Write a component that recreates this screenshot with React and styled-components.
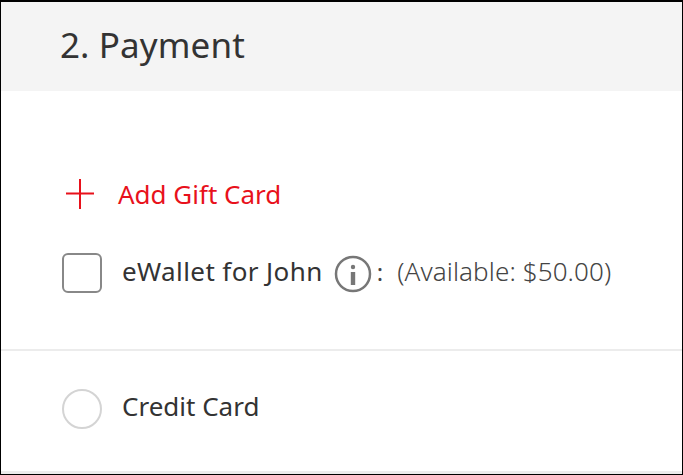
import React from "react";
import styled, { createGlobalStyle } from "styled-components";

const Global = createGlobalStyle`
  html, body { margin: 0; padding: 0; background: #fff; }
  * { box-sizing: border-box; }
`;

const Frame = styled.div`
  width: 683px;
  height: 475px;
  display: flex;
  flex-direction: column;
  border: 1px solid #000;
  border-top-width: 2px;
  background: #fff;
  font-family: "Noto Sans", "Open Sans", sans-serif;
  color: #333;
  overflow: hidden;
`;

const Header = styled.header`
  height: 89px;
  background: #f4f4f4;
  display: flex;
  align-items: center;
  padding: 0 0 4px 59px;
`;

const Title = styled.h2`
  margin: 0;
  font-size: 35px;
  font-weight: 400;
  letter-spacing: 0.1px;
  color: #333;
`;

const GiftSection = styled.section`
  height: 260px;
  padding: 87px 0 0 61px;
  border-bottom: 2px solid #ececec;
`;

const AddGift = styled.a`
  display: flex;
  align-items: center;
  gap: 24px;
  height: 32px;
  padding-left: 4px;
  color: #e8111b;
  font-size: 26px;
`;

const Row = styled.div`
  display: flex;
  align-items: center;
  margin-top: ${(p) => p.$top || 0}px;
`;

const CheckBox = styled.span`
  width: 40px;
  height: 40px;
  border: 2px solid #888;
  border-radius: 6px;
  margin-right: 20px;
  flex: none;
`;

const Radio = styled.span`
  width: 40px;
  height: 40px;
  border: 2px solid #d4d4d4;
  border-radius: 50%;
  margin-right: 20px;
  flex: none;
`;

const Label = styled.span`
  font-size: 26px;
  color: #333;
  white-space: nowrap;
  line-height: 34px;
  margin-bottom: ${(p) => p.$lift}px;
  letter-spacing: ${(p) => p.$spacing || 0}px;
`;

const Colon = styled.span`
  font-size: 24px;
  color: #444;
  margin-left: 5px;
  margin-bottom: 4px;
`;

const Note = styled.span`
  font-size: 26px;
  font-weight: 300;
  color: #444;
  margin-left: 14px;
  margin-bottom: 4px;
  letter-spacing: 0.11px;
  white-space: nowrap;
`;

const InfoIcon = styled.svg`
  width: 38px;
  height: 40px;
  margin-left: 11px;
  flex: none;
`;

const PaySection = styled.section`
  flex: 1;
  padding: 38px 0 0 61px;
`;

const Footer = styled.div`
  height: 3px;
  background: #ececec;
`;

export default function App() {
  return (
    <>
      <Global />
      <Frame>
        <Header>
          <Title>2. Payment</Title>
        </Header>
        <GiftSection>
          <AddGift>
            <svg width="28" height="30" viewBox="0 0 28 30" fill="none" stroke="#e8111b" strokeWidth="2">
              <path d="M14 0v30M0 14.5h28" />
            </svg>
            Add Gift Card
          </AddGift>
          <Row $top={43}>
            <CheckBox />
            <Label $lift={4} $spacing={0.4}>eWallet for John</Label>
            <InfoIcon viewBox="0 0 38 40" fill="none">
              <circle cx="19" cy="21" r="17" stroke="#777" strokeWidth="2.5" />
              <circle cx="19" cy="14" r="2.2" fill="#777" />
              <rect x="16.8" y="19" width="4.4" height="13" fill="#777" />
            </InfoIcon>
            <Colon>:</Colon>
            <Note>(Available: $50.00)</Note>
          </Row>
        </GiftSection>
        <PaySection>
          <Row>
            <Radio />
            <Label $lift={6}>Credit Card</Label>
          </Row>
        </PaySection>
        <Footer />
      </Frame>
    </>
  );
}
